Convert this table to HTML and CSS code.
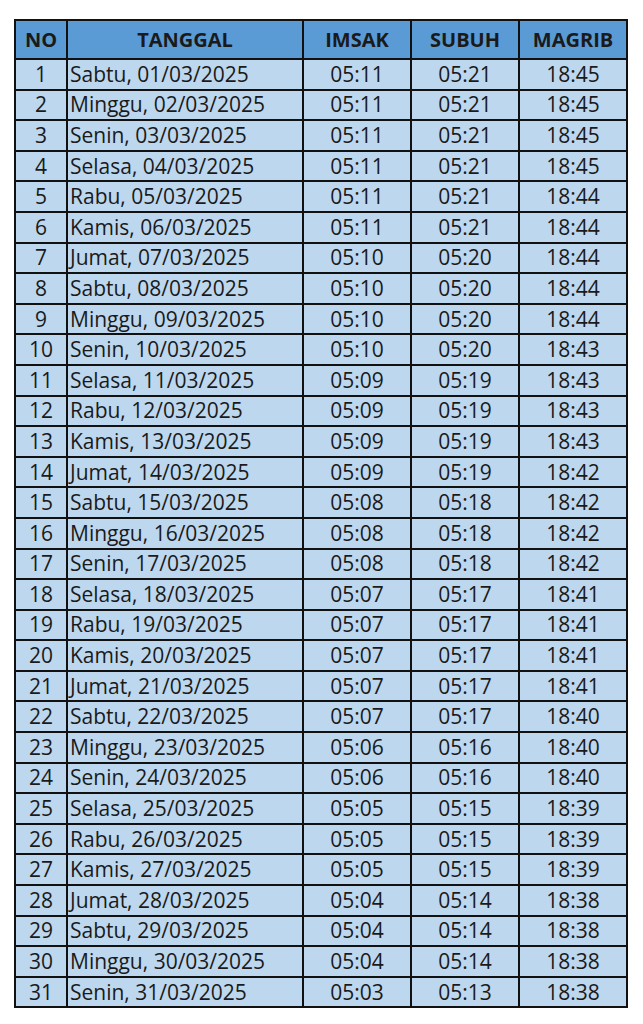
FILE: index.html
```html
<!DOCTYPE html>
<html>
<head>
<meta charset="utf-8">
<link rel="stylesheet" href="styles.css">
</head>
<body>
<table class="jadwal">
<colgroup>
<col class="c-no"><col class="c-tgl"><col class="c-t"><col class="c-t"><col class="c-t">
</colgroup>
<thead>
<tr><th>NO</th><th>TANGGAL</th><th>IMSAK</th><th>SUBUH</th><th>MAGRIB</th></tr>
</thead>
<tbody>
<tr><td>1</td><td class="tgl">Sabtu, 01/03/2025</td><td>05:11</td><td>05:21</td><td>18:45</td></tr>
<tr><td>2</td><td class="tgl">Minggu, 02/03/2025</td><td>05:11</td><td>05:21</td><td>18:45</td></tr>
<tr><td>3</td><td class="tgl">Senin, 03/03/2025</td><td>05:11</td><td>05:21</td><td>18:45</td></tr>
<tr><td>4</td><td class="tgl">Selasa, 04/03/2025</td><td>05:11</td><td>05:21</td><td>18:45</td></tr>
<tr><td>5</td><td class="tgl">Rabu, 05/03/2025</td><td>05:11</td><td>05:21</td><td>18:44</td></tr>
<tr><td>6</td><td class="tgl">Kamis, 06/03/2025</td><td>05:11</td><td>05:21</td><td>18:44</td></tr>
<tr><td>7</td><td class="tgl">Jumat, 07/03/2025</td><td>05:10</td><td>05:20</td><td>18:44</td></tr>
<tr><td>8</td><td class="tgl">Sabtu, 08/03/2025</td><td>05:10</td><td>05:20</td><td>18:44</td></tr>
<tr><td>9</td><td class="tgl">Minggu, 09/03/2025</td><td>05:10</td><td>05:20</td><td>18:44</td></tr>
<tr><td>10</td><td class="tgl">Senin, 10/03/2025</td><td>05:10</td><td>05:20</td><td>18:43</td></tr>
<tr><td>11</td><td class="tgl">Selasa, 11/03/2025</td><td>05:09</td><td>05:19</td><td>18:43</td></tr>
<tr><td>12</td><td class="tgl">Rabu, 12/03/2025</td><td>05:09</td><td>05:19</td><td>18:43</td></tr>
<tr><td>13</td><td class="tgl">Kamis, 13/03/2025</td><td>05:09</td><td>05:19</td><td>18:43</td></tr>
<tr><td>14</td><td class="tgl">Jumat, 14/03/2025</td><td>05:09</td><td>05:19</td><td>18:42</td></tr>
<tr><td>15</td><td class="tgl">Sabtu, 15/03/2025</td><td>05:08</td><td>05:18</td><td>18:42</td></tr>
<tr><td>16</td><td class="tgl">Minggu, 16/03/2025</td><td>05:08</td><td>05:18</td><td>18:42</td></tr>
<tr><td>17</td><td class="tgl">Senin, 17/03/2025</td><td>05:08</td><td>05:18</td><td>18:42</td></tr>
<tr><td>18</td><td class="tgl">Selasa, 18/03/2025</td><td>05:07</td><td>05:17</td><td>18:41</td></tr>
<tr><td>19</td><td class="tgl">Rabu, 19/03/2025</td><td>05:07</td><td>05:17</td><td>18:41</td></tr>
<tr><td>20</td><td class="tgl">Kamis, 20/03/2025</td><td>05:07</td><td>05:17</td><td>18:41</td></tr>
<tr><td>21</td><td class="tgl">Jumat, 21/03/2025</td><td>05:07</td><td>05:17</td><td>18:41</td></tr>
<tr><td>22</td><td class="tgl">Sabtu, 22/03/2025</td><td>05:07</td><td>05:17</td><td>18:40</td></tr>
<tr><td>23</td><td class="tgl">Minggu, 23/03/2025</td><td>05:06</td><td>05:16</td><td>18:40</td></tr>
<tr><td>24</td><td class="tgl">Senin, 24/03/2025</td><td>05:06</td><td>05:16</td><td>18:40</td></tr>
<tr><td>25</td><td class="tgl">Selasa, 25/03/2025</td><td>05:05</td><td>05:15</td><td>18:39</td></tr>
<tr><td>26</td><td class="tgl">Rabu, 26/03/2025</td><td>05:05</td><td>05:15</td><td>18:39</td></tr>
<tr><td>27</td><td class="tgl">Kamis, 27/03/2025</td><td>05:05</td><td>05:15</td><td>18:39</td></tr>
<tr><td>28</td><td class="tgl">Jumat, 28/03/2025</td><td>05:04</td><td>05:14</td><td>18:38</td></tr>
<tr><td>29</td><td class="tgl">Sabtu, 29/03/2025</td><td>05:04</td><td>05:14</td><td>18:38</td></tr>
<tr><td>30</td><td class="tgl">Minggu, 30/03/2025</td><td>05:04</td><td>05:14</td><td>18:38</td></tr>
<tr><td>31</td><td class="tgl">Senin, 31/03/2025</td><td>05:03</td><td>05:13</td><td>18:38</td></tr>
</tbody>
</table>
</body>
</html>
```
FILE: styles.css
```css
html, body {
  margin: 0;
  padding: 0;
  background: #ffffff;
}
body {
  padding: 19px 0 0 14px;
  font-family: "Open Sans", "Liberation Sans", sans-serif;
  color: #1a1a1a;
}
.jadwal {
  border-collapse: collapse;
  table-layout: fixed;
  width: 613px;
  font-size: 21px;
}
.c-no { width: 52px; }
.c-tgl { width: 236px; }
.c-t { width: 108px; }
.jadwal th, .jadwal td {
  border: 2px solid #111111;
  padding: 0;
  text-align: center;
  white-space: nowrap;
  line-height: 1;
}
.jadwal th {
  background: #5b9bd5;
  font-weight: 700;
  font-size: 20px;
  height: 37px;
}
.jadwal td {
  background: #bdd7ee;
  height: 28.6px;
}
.jadwal td.tgl {
  text-align: left;
  padding-left: 2px;
}
```
